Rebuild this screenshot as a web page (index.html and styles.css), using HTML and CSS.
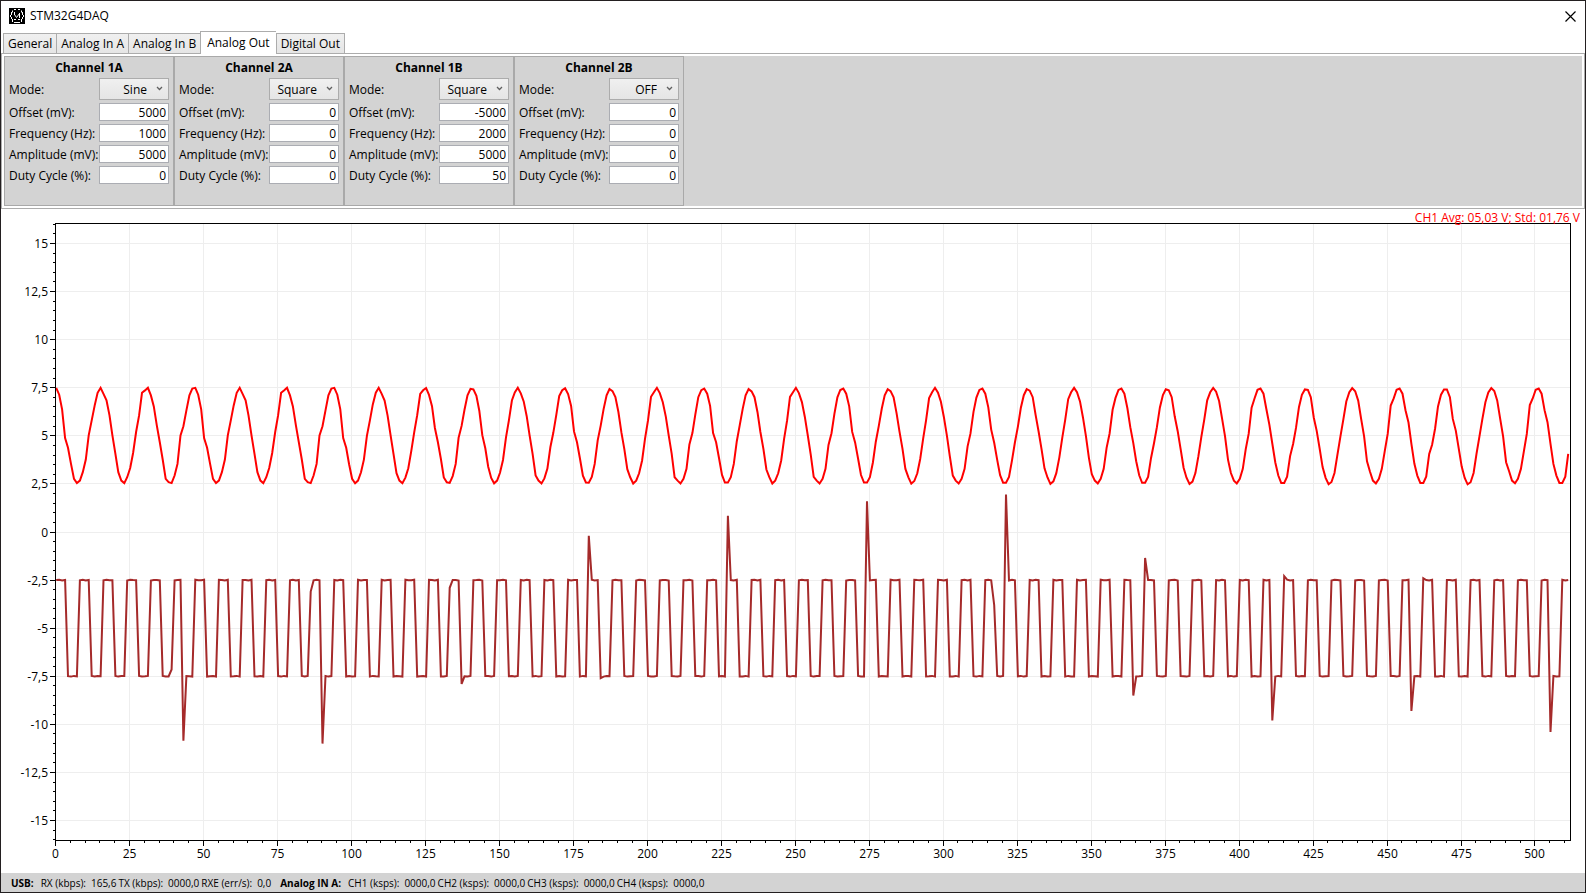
FILE: index.html
```html
<!DOCTYPE html>
<html lang="en">
<head>
    <meta charset="UTF-8">
    <meta name="viewport" content="width=device-width, initial-scale=1.0">
    <title>STM32G4DAQ</title>
    <link rel="stylesheet" href="styles.css">
</head>
<body>
    <header class="titlebar">
        <svg class="app-icon" viewBox="0 0 16 16" width="16" height="16" aria-hidden="true">
            <rect width="16" height="16" fill="#000"/>
            <path d="M5 1.5h2M9 1.5h2M3.5 2.5v2M12.5 2.5v2M2.5 4v3M1.5 7v2M2.5 9v2M13.5 4v3M14.5 7v2M13.5 9v2M3.5 11v3M12.5 11v3M5 14.5h6M5.5 4v3M5.5 6.5l2 3 3-4M10.5 5v5M5 11.5h2M9 11.5h2" fill="none" stroke="#fff" stroke-width="1"/>
        </svg>
        <h1>STM32G4DAQ</h1>
        <button class="close" type="button" aria-label="Close">
            <svg viewBox="0 0 11 11" width="11" height="11"><path d="M.5 .5l10 10M10.5 .5l-10 10" fill="none" stroke="#000" stroke-width="1.2"/></svg>
        </button>
    </header>

    <nav class="tabs" role="tablist">
        <button type="button" role="tab">General</button>
        <button type="button" role="tab">Analog In A</button>
        <button type="button" role="tab">Analog In B</button>
        <button type="button" role="tab" class="active" aria-selected="true">Analog Out</button>
        <button type="button" role="tab">Digital Out</button>
    </nav>

    <section class="panel">
        <div class="channels" id="channels"></div>
    </section>

    <main class="plot">
        <p class="stats">CH1 Avg: 05,03 V; Std: 01,76 V</p>
        <svg id="chart" role="img" aria-label="Analog signals"></svg>
    </main>

    <footer class="status">
        <b>USB:</b>
        <span>RX (kbps):</span><span class="value">165,6</span>
        <span>TX (kbps):</span><span class="value">0000,0</span>
        <span>RXE (err/s):</span><span class="value">0,0</span>
        <b>Analog IN A:</b>
        <span>CH1 (ksps):</span><span class="value">0000,0</span>
        <span>CH2 (ksps):</span><span class="value">0000,0</span>
        <span>CH3 (ksps):</span><span class="value">0000,0</span>
        <span>CH4 (ksps):</span><span class="value">0000,0</span>
    </footer>
    <script src="app.js"></script>
</body>
</html>
```

FILE: styles.css
```css
* {
    box-sizing: border-box;
}

body {
    margin: 0;
    height: 100vh;
    display: flex;
    flex-direction: column;
    border: 1px solid #231f20;
    background: white;
    color: black;
    font-family: "Open Sans", "Noto Sans", sans-serif;
    font-size: 12px;
    line-height: 16px;
}

button, input, select {
    font: inherit;
    color: inherit;
    border-radius: 0;
    margin: 0;
}

.titlebar {
    display: flex;
    align-items: center;
    height: 30px;
    padding: 0 9px 0 8px;
    gap: 5px;
}

.titlebar h1 {
    margin: 0;
    flex: 1;
    font-size: 12px;
    font-weight: normal;
}

.close {
    display: flex;
    padding: 0;
    border: none;
    background: none;
}

.tabs {
    display: flex;
    align-items: flex-end;
    height: 22px;
    padding-left: 2px;
}

.tabs button {
    height: 20px;
    padding: 1px 4px 0;
    border: 1px solid #acacac;
    border-bottom: none;
    border-right: none;
    background: linear-gradient(#f0f0f0, #e5e5e5);
}

.tabs button:last-child {
    border-right: 1px solid #acacac;
}

.tabs .active {
    height: 23px;
    margin-bottom: -1px;
    padding: 0 6px 1px;
    background: white;
    z-index: 1;
}

.panel {
    padding: 2px;
    border: 1px solid #acacac;
}

.channels {
    display: flex;
    background: #d3d3d3;
}

.channel {
    width: 170px;
    height: 150px;
    padding: 3px 4px;
    border: 1px solid #a9a9a9;
}

.channel h2 {
    margin: 0 0 2px;
    font-size: 12px;
    line-height: 16px;
    text-align: center;
}

.fields {
    display: grid;
    grid-template-columns: 1fr 70px;
    gap: 3px 0;
    align-items: center;
    white-space: nowrap;
}

.fields label {
    padding-top: 1px;
}

.fields input {
    width: 70px;
    height: 18px;
    padding: 1px 2px 0;
    border: 1px solid #abadb3;
    text-align: right;
}

.combo {
    position: relative;
    height: 22px;
}

.combo select {
    appearance: none;
    width: 70px;
    height: 22px;
    padding: 1px 21px 0 4px;
    border: 1px solid #acacac;
    background: linear-gradient(#f0f0f0, #e5e5e5);
    text-align-last: right;
}

.combo svg {
    position: absolute;
    right: 6px;
    top: 8px;
    pointer-events: none;
}

.plot {
    flex: 1;
    min-height: 0;
    position: relative;
}

.plot svg {
    display: block;
    width: 100%;
    height: 100%;
}

.stats {
    position: absolute;
    top: 1px;
    right: 5px;
    margin: 0;
    color: red;
}

.grid {
    stroke: #eeeeee;
}

.axis {
    fill: none;
    stroke: black;
}

.sine {
    fill: none;
    stroke: red;
    stroke-width: 2;
}

.square {
    fill: none;
    stroke: brown;
    stroke-width: 2;
}

.status {
    display: flex;
    align-items: center;
    height: 19px;
    padding-left: 10px;
    background: #d3d3d3;
    font-size: 10px;
    white-space: nowrap;
}

.status b {
    margin-right: 7px;
}

.status span {
    margin-right: 5px;
}

.status .value {
    margin-right: 2px;
}

.status .value + b {
    margin-left: 7px;
}
```

FILE: app.js
```js
const channels = [
    { name: 'Channel 1A', mode: 'Sine', values: [5000, 1000, 5000, 0] },
    { name: 'Channel 2A', mode: 'Square', values: [0, 0, 0, 0] },
    { name: 'Channel 1B', mode: 'Square', values: [-5000, 2000, 5000, 50] },
    { name: 'Channel 2B', mode: 'OFF', values: [0, 0, 0, 0] }
];
const labels = ['Offset (mV):', 'Frequency (Hz):', 'Amplitude (mV):', 'Duty Cycle (%):'];

document.getElementById('channels').innerHTML = channels.map((ch, c) => `
    <div class="channel">
        <h2>${ch.name}</h2>
        <div class="fields">
            <label for="mode${c}">Mode:</label>
            <div class="combo">
                <select id="mode${c}">
                    ${['OFF', 'Sine', 'Square'].map(m => `<option${m === ch.mode ? ' selected' : ''}>${m}</option>`).join('')}
                </select>
                <svg width="7" height="5" viewBox="0 0 7 5"><path d="M1 1l2.5 2.5L6 1" fill="none" stroke="#606060" stroke-width="1.3"/></svg>
            </div>
            ${labels.map((l, i) => `<label for="f${c}${i}">${l}</label><input id="f${c}${i}" value="${ch.values[i]}">`).join('')}
        </div>
    </div>`).join('');

// three sine periods fit in 47 samples; the shape drifts over the buffer
const first = [7.5, 7.14, 6.38, 4.88, 4.38, 3.54, 2.76, 2.54, 2.67, 3.11, 3.77, 5.02, 5.8, 6.58, 7.24, 7.5,
    7.18, 6.85, 6.06, 5.02, 4.06, 3.11, 2.67, 2.54, 2.85, 3.33, 4.11, 5.2, 6.06, 7.24, 7.36, 7.5,
    7.1, 6.53, 5.54, 4.67, 3.77, 2.76, 2.59, 2.54, 2.94, 3.54, 5.02, 5.5, 6.32, 7.1, 7.46];
const middle = [7.31, 7.01, 6.23, 5.2, 4.32, 3.25, 2.85, 2.52, 2.67, 3.05, 3.72, 4.84, 5.8, 7.03, 7.27, 7.5,
    7.22, 6.75, 6, 5.02, 4.06, 2.85, 2.67, 2.52, 2.76, 3.28, 4.55, 5.14, 6.1, 7.01, 7.38, 7.46,
    7.19, 6.56, 5.14, 4.67, 3.85, 2.97, 2.57, 2.57, 2.85, 3.54, 4.72, 5.54, 6.4, 7.1, 7.43];
const last = [7.41, 7.01, 5.88, 5.27, 4.32, 3.4, 2.81, 2.48, 2.59, 3.07, 4.06, 4.98, 5.88, 6.75, 7.26, 7.48,
    7.33, 6.84, 5.88, 4.97, 3.63, 3.16, 2.67, 2.53, 2.76, 3.28, 4.2, 5.1, 6.6, 6.94, 7.4, 7.46,
    7.19, 6.32, 5.71, 4.58, 3.54, 2.93, 2.55, 2.55, 2.88, 4.06, 4.54, 5.38, 6.53, 7.14, 7.41];

// samples where the square wave glitches
const spikes = {
    39: -7.15, 43: -10.85, 86: -3.1, 90: -11, 133: -2.9, 137: -7.9, 180: -0.2, 184: -7.6,
    227: 0.85, 274: 1.6, 317: -3.8, 321: 1.95, 364: -8.5, 368: -1.35,
    411: -9.8, 415: -2.3, 458: -9.3, 462: -2.4, 505: -10.4
};

function mix(a, b, t) {
    t = Math.min(Math.max(t, 0), 1);
    return a * (1 - t) + b * t;
}

function sine(n) {
    // the buffer ends at phase 41, so sample 470 starts the last block
    const k = n % 47;
    return n < 221
        ? mix(first[k], middle[k], (n - 94) / 104)
        : mix(middle[k], last[k], (n - 245) / 219);
}

function square(n) {
    if (n in spikes) return spikes[n];
    const k = n % 47;
    const high = k < 40 ? k % 8 < 4 : k < 43;
    return (high || (k === 39 && n > 360) ? -2.5 : -7.5) + 0.02 * Math.sin(n * 2.3);
}

function draw() {
    const svg = document.getElementById('chart');
    const w = svg.clientWidth;
    const h = svg.clientHeight;
    const left = 54, right = w - 15, top = 14, bottom = h - 33;
    const limit = 16.04;
    const px = n => left + n * (right - left) / 512;
    const py = v => top + (limit - v) * (bottom - top) / (2 * limit);
    const snap = v => Math.round(v) + 0.5;
    let grid = '', ticks = '', text = '';

    for (let n = 0; n <= 510; n += 5) {
        const x = snap(px(n));
        const major = n % 25 === 0;
        ticks += `M${x} ${bottom}v${major ? 6 : 3}`;
        if (major) {
            grid += `M${x} ${top}V${bottom}`;
            text += `<text x="${x}" y="${bottom + 18}" text-anchor="middle">${n}</text>`;
        }
    }
    for (let v = -16; v <= 16; v += 0.5) {
        const y = snap(py(v));
        const major = v % 2.5 === 0;
        ticks += `M${left} ${y}h${major ? -5 : -2}`;
        if (major) {
            grid += `M${left} ${y}H${right}`;
            text += `<text x="${left - 7}" y="${y + 4}" text-anchor="end">${String(v).replace('.', ',')}</text>`;
        }
    }

    const line = f => Array.from({ length: 512 }, (_, n) => `${(px(n) + 1.2).toFixed(1)},${(py(f(n)) + 0.5).toFixed(1)}`).join(' ');
    svg.innerHTML = `
        <path class="grid" d="${grid}"/>
        <polyline class="sine" points="${line(sine)}"/>
        <polyline class="square" points="${line(square)}"/>
        <path class="axis" d="${ticks}"/>
        <rect class="axis" x="${left + 0.5}" y="${top + 0.5}" width="${right - left}" height="${bottom - top}"/>
        ${text}`;
}

draw();
window.addEventListener('resize', draw);
```
